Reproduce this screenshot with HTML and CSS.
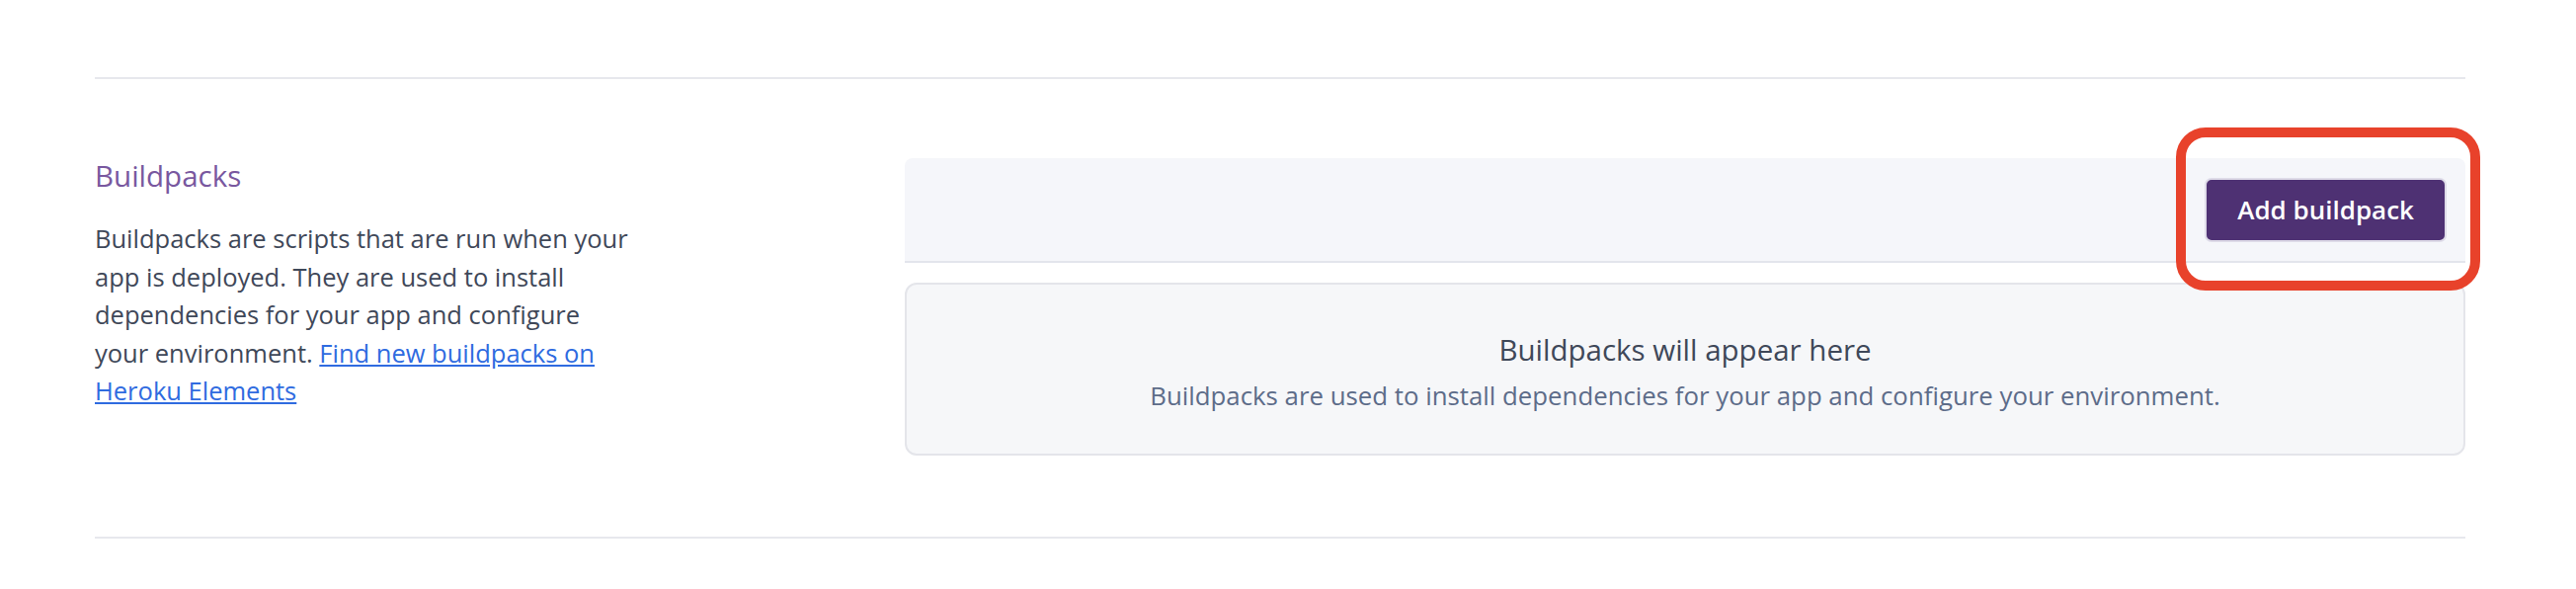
FILE: index.html
```html
<!DOCTYPE html>
<html lang="en">
<head>
<meta charset="utf-8">
<title>Buildpacks</title>
<link rel="stylesheet" href="styles.css">
</head>
<body>
<main class="page">
  <hr class="sep">
  <section class="row">
    <div class="info">
      <h2 class="info-title">Buildpacks</h2>
      <p class="info-text">Buildpacks are scripts that are run when your app is deployed. They are used to install dependencies for your app and configure your environment. <a class="info-link" href="#">Find new buildpacks on Heroku Elements</a></p>
    </div>
    <div class="content">
      <div class="toolbar">
        <button class="btn-primary" type="button">Add buildpack</button>
        <span class="highlight"></span>
      </div>
      <div class="empty">
        <div class="empty-title">Buildpacks will appear here</div>
        <div class="empty-text">Buildpacks are used to install dependencies for your app and configure your environment.</div>
      </div>
    </div>
  </section>
  <hr class="sep">
</main>
</body>
</html>
```

FILE: styles.css
```css
* { box-sizing: border-box; }
html, body { margin: 0; padding: 0; background: #ffffff; }
body {
  font-family: "Open Sans", "Liberation Sans", sans-serif;
  color: #3f4859;
}
.page {
  padding: 78px 112px 0 96px;
}
.sep {
  margin: 0;
  border: 0;
  height: 2px;
  background: #e7e8ed;
}
.row {
  display: flex;
  padding: 80px 0 82px 0;
}
.info {
  width: 820px;
  flex: none;
}
.info-title {
  margin: 0;
  font-weight: 400;
  font-size: 29.5px;
  line-height: 36px;
  color: #79589f;
}
.info-text {
  margin: 26px 0 0 0;
  width: 546px;
  font-size: 25.5px;
  line-height: 38.5px;
  color: #3f4859;
}
.info-link {
  color: #2f6be0;
  text-decoration: underline;
}
.content {
  flex: 1;
  display: flex;
  flex-direction: column;
  gap: 20px;
}
.toolbar {
  position: relative;
  height: 106px;
  display: flex;
  align-items: center;
  justify-content: flex-end;
  padding-right: 19px;
  background: #f5f6fa;
  border-bottom: 2px solid #e3e5ec;
  border-radius: 8px 8px 0 0;
}
.btn-primary {
  height: 65px;
  padding: 0 31px;
  font-family: "Open Sans", "Liberation Sans", sans-serif;
  font-weight: 600;
  font-size: 26px;
  color: #ffffff;
  background: #4e3173;
  border: 2px solid #dedbe8;
  border-radius: 7px;
}
.highlight {
  position: absolute;
  top: -31px;
  right: -15px;
  bottom: -30px;
  width: 308px;
  border: 10px solid #e8422b;
  border-radius: 30px;
  pointer-events: none;
}
.empty {
  height: 175px;
  border: 2px solid #e4e5ea;
  border-radius: 12px;
  background: #f6f7f9;
  display: flex;
  flex-direction: column;
  align-items: center;
  padding-top: 46px;
}
.empty-title {
  font-size: 29.5px;
  line-height: 40px;
  color: #3f4859;
}
.empty-text {
  margin-top: 9px;
  font-size: 25.8px;
  line-height: 34px;
  color: #5d6c89;
}
```
